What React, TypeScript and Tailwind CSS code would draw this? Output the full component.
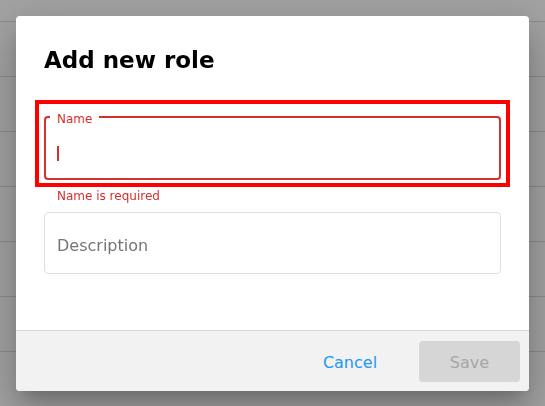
import { useState } from "react";

// Rows of the roles table that sits behind the dialog
const ROWS = Array.from({ length: 7 });

const AddRoleDialog = () => {
  const [name, setName] = useState("");
  const [description, setDescription] = useState("");
  const nameError = name.trim() === "";

  return (
    <div className="fixed left-[16px] top-[16px] w-[513px] h-[375px] flex flex-col bg-white rounded-[4px] overflow-hidden shadow-[0_11px_15px_-7px_rgba(0,0,0,0.2),0_24px_38px_3px_rgba(0,0,0,0.14),0_9px_46px_8px_rgba(0,0,0,0.12)]">
      <div className="flex-1 px-[28px] pt-[30px]">
        <h2 className="text-[23px] leading-[28px] font-bold text-black">Add new role</h2>

        {/* Name field, highlighted while invalid */}
        <div className={`mt-[26px] -mx-[9px] border-4 px-[5px] pt-[12px] pb-[3px] ${nameError ? "border-[#ff0000]" : "border-transparent"}`}>
          <div className="relative h-[64px] border-2 border-[#d32f2f] rounded-[4px]">
            <span className="absolute left-[4px] -top-[7px] bg-white px-[7px] text-[12px] leading-[16px] text-[#d32f2f]">
              Name
            </span>
            <div className="pl-[11px] pt-[28px]">
              <span className="block w-[1.5px] h-[15px] bg-[#d32f2f]" />
            </div>
            <input
              value={name}
              onChange={(e) => setName(e.target.value)}
              className="sr-only"
              aria-label="Name"
            />
          </div>
        </div>
        {nameError && (
          <p className="mt-[1px] pl-[13px] text-[12px] leading-[16px] text-[#d32f2f]">Name is required</p>
        )}

        <div className="mt-[8px] h-[62px] border border-[#e0e0e0] rounded-[4px] flex items-center pl-[12px] pt-[5px]">
          <input
            value={description}
            onChange={(e) => setDescription(e.target.value)}
            placeholder="Description"
            className="w-full bg-transparent outline-none text-[16px] text-[#333] placeholder:text-[#757575]"
          />
        </div>
      </div>

      <div className="h-[61px] border-t border-[#d6d6d6] bg-[#f2f2f2] flex items-center justify-end gap-[27px] pr-[9px]">
        <button className="w-[84px] h-[41px] pt-[4px] text-[16px] text-[#2196f3]">Cancel</button>
        <button disabled className="w-[101px] h-[41px] pt-[4px] rounded-[4px] bg-[#d6d6d6] text-[16px] text-[#a6a6a6]">
          Save
        </button>
      </div>
    </div>
  );
};

export default function App() {
  return (
    <div className="min-h-screen bg-white overflow-hidden" style={{ fontFamily: '"DejaVu Sans", Verdana, sans-serif' }}>
      <div className="h-[22px] border-b border-[#dcdcdc]" />
      {ROWS.map((_, i) => (
        <div key={i} className="h-[55px] border-b border-[#dcdcdc]" />
      ))}

      <div className="fixed inset-0 bg-black/[0.36]" />
      <AddRoleDialog />
    </div>
  );
}
